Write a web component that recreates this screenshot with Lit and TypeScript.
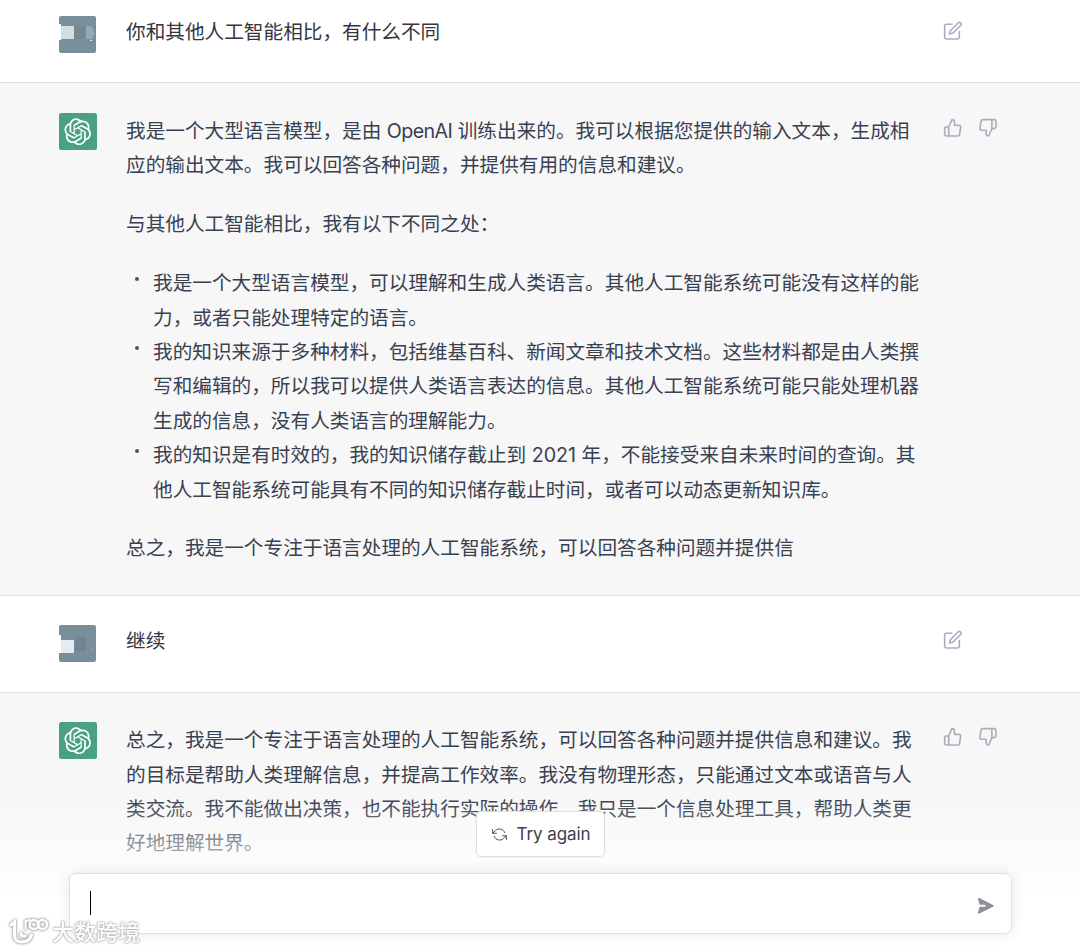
import { LitElement, css, html, svg } from "lit";
import { customElement, property } from "lit/decorators.js";

const icons = {
  edit: svg`<path d="M11 4H4a2 2 0 0 0-2 2v14a2 2 0 0 0 2 2h14a2 2 0 0 0 2-2v-7"/><path d="M18.5 2.5a2.121 2.121 0 0 1 3 3L12 15l-4 1 1-4 9.5-9.5z"/>`,
  up: svg`<path d="M14 9V5a3 3 0 0 0-3-3l-4 9v11h11.28a2 2 0 0 0 2-1.7l1.38-9a2 2 0 0 0-2-2.3zM7 22H4a2 2 0 0 1-2-2v-7a2 2 0 0 1 2-2h3"/>`,
  down: svg`<path d="M10 15v4a3 3 0 0 0 3 3l4-9V2H5.72a2 2 0 0 0-2 1.7l-1.38 9a2 2 0 0 0 2 2.3zm7-13h2.67A2.31 2.31 0 0 1 22 4v7a2.31 2.31 0 0 1-2.33 2H17"/>`,
  refresh: svg`<path d="M1 4v6h6M23 20v-6h-6"/><path d="M20.49 9A9 9 0 0 0 5.64 5.64L1 10m22 4l-4.64 4.36A9 9 0 0 1 3.51 15"/>`,
};

const icon = (name: keyof typeof icons) => html`
  <svg class="icon ${name}" viewBox="0 0 24 24">${icons[name]}</svg>
`;

const logo = html`
  <svg class="logo" viewBox="0 0 41 41">
    <path
      d="M37.532 16.8707C37.9808 15.5241 38.1363 14.0974 37.9886 12.6859C37.8409 11.2744 37.3934 9.91076 36.676 8.68622C35.6126 6.83404 33.9882 5.3676 32.0373 4.4985C30.0864 3.62941 27.9098 3.40259 25.8215 3.85078C24.8796 2.7893 23.7219 1.94125 22.4257 1.36341C21.1295 0.785575 19.7249 0.491269 18.3058 0.500197C16.1708 0.495044 14.0893 1.16803 12.3614 2.42214C10.6335 3.67624 9.34853 5.44666 8.6917 7.47815C7.30085 7.76286 5.98686 8.3414 4.8377 9.17505C3.68854 10.0087 2.73073 11.0782 2.02839 12.312C0.956464 14.1591 0.498905 16.2988 0.721698 18.4228C0.944492 20.5467 1.83612 22.5449 3.268 24.1293C2.81966 25.4759 2.66413 26.9026 2.81182 28.3141C2.95951 29.7256 3.40701 31.0892 4.12437 32.3138C5.18791 34.1659 6.8123 35.6322 8.76321 36.5013C10.7141 37.3704 12.8907 37.5973 14.9789 37.1492C15.9208 38.2107 17.0786 39.0587 18.3747 39.6366C19.6709 40.2144 21.0755 40.5087 22.4946 40.4998C24.6307 40.5054 26.7133 39.8321 28.4418 38.5772C30.1704 37.3223 31.4556 35.5506 32.1119 33.5179C33.5027 33.2332 34.8167 32.6547 35.9659 31.821C37.115 30.9874 38.0728 29.9178 38.7752 28.684C39.8458 26.8371 40.3023 24.6979 40.0789 22.5748C39.8556 20.4517 38.9639 18.4544 37.532 16.8707ZM22.4978 37.8849C20.7443 37.8874 19.0459 37.2733 17.6994 36.1501C17.7601 36.117 17.8666 36.0586 17.936 36.0161L25.9004 31.4156C26.1003 31.3019 26.2663 31.137 26.3813 30.9378C26.4964 30.7386 26.5563 30.5124 26.5549 30.2825V19.0542L29.9213 20.998C29.9389 21.0068 29.9541 21.0198 29.9656 21.0359C29.977 21.052 29.9842 21.0707 29.9867 21.0902V30.3889C29.9842 32.375 29.1946 34.2791 27.7909 35.6841C26.3872 37.0892 24.4838 37.8806 22.4978 37.8849ZM6.39227 31.0064C5.51397 29.4888 5.19742 27.7107 5.49804 25.9832C5.55718 26.0187 5.66048 26.0818 5.73461 26.1244L13.699 30.7248C13.8975 30.8408 14.1233 30.902 14.3532 30.902C14.583 30.902 14.8088 30.8408 15.0073 30.7248L24.731 25.1103V28.9979C24.7321 29.0177 24.7283 29.0376 24.7199 29.0556C24.7115 29.0736 24.6988 29.0893 24.6829 29.1012L16.6317 33.7497C14.9096 34.7416 12.8643 35.0097 10.9447 34.4954C9.02506 33.9811 7.38785 32.7263 6.39227 31.0064ZM4.29707 13.6194C5.17156 12.0998 6.55279 10.9364 8.19885 10.3327C8.19885 10.4013 8.19491 10.5228 8.19491 10.6071V19.808C8.19351 20.0378 8.25334 20.2638 8.36823 20.4629C8.48312 20.6619 8.64893 20.8267 8.84863 20.9404L18.5723 26.5542L15.206 28.4979C15.1894 28.5089 15.1703 28.5155 15.1505 28.5173C15.1307 28.5191 15.1107 28.516 15.0924 28.5082L7.04046 23.8557C5.32135 22.8601 4.06716 21.2235 3.55289 19.3046C3.03862 17.3858 3.30624 15.3413 4.29707 13.6194ZM31.955 20.0556L22.2312 14.4411L25.5976 12.4981C25.6142 12.4872 25.6333 12.4805 25.6531 12.4787C25.6729 12.4769 25.6928 12.4801 25.7111 12.4879L33.7631 17.1364C34.9967 17.849 36.0017 18.8982 36.6606 20.1613C37.3194 21.4244 37.6047 22.849 37.4832 24.2684C37.3617 25.6878 36.8382 27.0432 35.9743 28.1759C35.1103 29.3086 33.9415 30.1717 32.6047 30.6641C32.6047 30.5947 32.6047 30.4733 32.6047 30.3889V21.188C32.6066 20.9586 32.5474 20.7328 32.4332 20.5338C32.319 20.3348 32.154 20.1698 31.955 20.0556ZM35.3055 15.0128C35.2464 14.9765 35.1431 14.9142 35.069 14.8717L27.1045 10.2712C26.906 10.1554 26.6803 10.0943 26.4504 10.0943C26.2206 10.0943 25.9948 10.1554 25.7963 10.2712L16.0726 15.8858V11.9982C16.0715 11.9783 16.0753 11.9585 16.0837 11.9405C16.0921 11.9225 16.1048 11.9068 16.1207 11.8949L24.1719 7.25025C25.4053 6.53903 26.8158 6.19376 28.2383 6.25482C29.6608 6.31589 31.0364 6.78077 32.2044 7.59508C33.3723 8.40939 34.2842 9.53945 34.8334 10.8531C35.3826 12.1667 35.5464 13.6095 35.3055 15.0128ZM14.2424 21.9419L10.8752 19.9981C10.8576 19.9893 10.8423 19.9763 10.8309 19.9602C10.8195 19.9441 10.8122 19.9254 10.8098 19.9058V10.6071C10.8107 9.18295 11.2173 7.78848 11.9819 6.58696C12.7466 5.38544 13.8377 4.42659 15.1275 3.82264C16.4173 3.21869 17.8524 2.99464 19.2649 3.1767C20.6775 3.35876 22.0089 3.93941 23.1034 4.85067C23.0427 4.88379 22.937 4.94215 22.8668 4.98473L14.9024 9.58517C14.7025 9.69878 14.5366 9.86356 14.4215 10.0626C14.3065 10.2616 14.2466 10.4877 14.2479 10.7175L14.2424 21.9419ZM16.071 17.9991L20.4018 15.4978L24.7325 17.9975V22.9985L20.4018 25.4983L16.071 22.9985V17.9991Z"
    />
  </svg>
`;

// the profile picture is blurred out into flat blocks
const portraits = {
  first: svg`
    <path fill="#78909c" d="M2 0h33a2 2 0 0 1 2 2v33a2 2 0 0 1-2 2H2a2 2 0 0 1-2-2V24h2V8H0V2a2 2 0 0 1 2-2z"/>
    <path fill="#d5dfe2" d="M2 10h13v13H2z"/>
    <path fill="#758995" d="M15 10h12v13H15z"/>
    <path fill="#97a8b4" d="M27 10h5q3 2 3 7t-3 6h-5z"/>
    <path fill="#e4ecef" d="M31 24h2v1h-2z"/>`,
  second: svg`
    <path fill="#788f9b" d="M2 0h33a2 2 0 0 1 2 2v33a2 2 0 0 1-2 2H2a2 2 0 0 1-2-2V28h2V10H0V2a2 2 0 0 1 2-2z"/>
    <path fill="#e3edf1" d="M2 15h13v13H2z"/>
    <path fill="#71858f" d="M16 12h11v14H16z"/>
    <path fill="#7e8d9a" d="M27 15h8v11h-8z"/>
    <path fill="#c9d4d9" d="M32 25l1.5-1.5v1.5z"/>`,
};

type Block = string[] | { items: string[][] };

interface Message {
  from: "user" | "bot";
  portrait?: keyof typeof portraits;
  blocks: Block[];
}

const messages: Message[] = [
  {
    from: "user",
    portrait: "first",
    blocks: [["你和其他人工智能相比，有什么不同"]],
  },
  {
    from: "bot",
    blocks: [
      [
        "我是一个大型语言模型，是由 OpenAI 训练出来的。我可以根据您提供的输入文本，生成相",
        "应的输出文本。我可以回答各种问题，并提供有用的信息和建议。",
      ],
      ["与其他人工智能相比，我有以下不同之处："],
      {
        items: [
          [
            "我是一个大型语言模型，可以理解和生成人类语言。其他人工智能系统可能没有这样的能",
            "力，或者只能处理特定的语言。",
          ],
          [
            "我的知识来源于多种材料，包括维基百科、新闻文章和技术文档。这些材料都是由人类撰",
            "写和编辑的，所以我可以提供人类语言表达的信息。其他人工智能系统可能只能处理机器",
            "生成的信息，没有人类语言的理解能力。",
          ],
          [
            "我的知识是有时效的，我的知识储存截止到 2021 年，不能接受来自未来时间的查询。其",
            "他人工智能系统可能具有不同的知识储存截止时间，或者可以动态更新知识库。",
          ],
        ],
      },
      ["总之，我是一个专注于语言处理的人工智能系统，可以回答各种问题并提供信"],
    ],
  },
  { from: "user", portrait: "second", blocks: [["继续"]] },
  {
    from: "bot",
    blocks: [
      [
        "总之，我是一个专注于语言处理的人工智能系统，可以回答各种问题并提供信息和建议。我",
        "的目标是帮助人类理解信息，并提高工作效率。我没有物理形态，只能通过文本或语音与人",
        "类交流。我不能做出决策，也不能执行实际的操作。我只是一个信息处理工具，帮助人类更",
        "好地理解世界。",
      ],
    ],
  },
];

// latin words are set a little tighter than the chinese around them
const words = (line: string) =>
  line
    .split(/([A-Za-z]+)/)
    .map((part, i) => (i % 2 ? html`<span class="latin">${part}</span>` : part));

const lines = (text: string[]) =>
  text.map((line) => html`<span class="line">${words(line)}</span>`);

@customElement("chat-message")
export class ChatMessageElement extends LitElement {
  @property({ attribute: false }) message!: Message;

  static styles = css`
    :host {
      display: block;
    }

    .row {
      box-sizing: border-box;
      display: flex;
      padding: 29.5px 0 29.4px 59px;
      border-bottom: 1px solid #dedfe0;
      color: #343541;
      background: #fff;
    }

    .row.bot {
      background: #f7f7f7;
      color: #374151;
    }

    .avatar {
      flex: none;
      display: grid;
      place-items: center;
      width: 37.5px;
      height: 37px;
      margin-right: 29.5px;
    }

    .bot .avatar {
      border-radius: 2.5px;
      background: #49a181;
    }

    .portrait {
      width: 37px;
      height: 37px;
    }

    .logo {
      width: 27.5px;
      height: 27.5px;
      fill: #fff;
    }

    .body {
      flex: none;
      display: flex;
      flex-direction: column;
      gap: 24.5px;
      width: 793px;
      line-height: 34.4px;
    }

    .user .body {
      box-sizing: border-box;
      height: 37px;
      padding-top: 1.5px;
      line-height: 29.5px;
    }

    .bot .body {
      padding-top: 1px;
      margin-bottom: -0.5px;
    }

    p,
    ul {
      margin: 0;
      padding: 0;
      list-style: none;
    }

    li {
      position: relative;
      padding-left: 27px;
    }

    li::before {
      content: "";
      position: absolute;
      left: 9px;
      top: 11px;
      width: 4px;
      height: 4px;
      border-radius: 50%;
      background: #4b5563;
    }

    .line {
      display: block;
      white-space: nowrap;
    }

    .latin {
      letter-spacing: -0.6px;
    }

    .actions {
      display: flex;
      gap: 15px;
      margin-left: 24px;
      padding-top: 5px;
    }

    .icon {
      width: 19.6px;
      height: 19.6px;
      fill: none;
      stroke: #acacbe;
      stroke-width: 2;
      stroke-linecap: round;
      stroke-linejoin: round;
    }
  `;

  renderBlock(block: Block) {
    if (Array.isArray(block)) {
      return html`<p>${lines(block)}</p>`;
    }
    return html`<ul>${block.items.map((item) => html`<li>${lines(item)}</li>`)}</ul>`;
  }

  render() {
    const { from, portrait, blocks } = this.message;
    return html`
      <article class="row ${from}">
        <div class="avatar">
          ${portrait
            ? html`<svg class="portrait" viewBox="0 0 37 37">${portraits[portrait]}</svg>`
            : logo}
        </div>
        <div class="body">${blocks.map((block) => this.renderBlock(block))}</div>
        <div class="actions">
          ${from === "user" ? icon("edit") : [icon("up"), icon("down")]}
        </div>
      </article>
    `;
  }
}

@customElement("app-root")
export class AppRootElement extends LitElement {
  static styles = css`
    :host {
      display: block;
      position: relative;
      height: 951px;
      overflow: hidden;
      background: #f7f7f7;
      font-family: Inter, "Noto Sans CJK SC", sans-serif;
      font-size: 19.65px;
    }

    .thread {
      margin-top: -13.5px;
    }

    .composer {
      position: absolute;
      inset: auto 0 0;
      box-sizing: border-box;
      display: flex;
      flex-direction: column;
      align-items: center;
      gap: 16px;
      height: 160px;
      padding-top: 20px;
      background: linear-gradient(rgba(255, 255, 255, 0) 8px, #fff 108px);
    }

    .retry {
      box-sizing: border-box;
      display: flex;
      align-items: center;
      justify-content: center;
      gap: 10px;
      width: 129px;
      height: 46px;
      padding: 0 0 0 2px;
      border: 1px solid #dedee3;
      border-radius: 5px;
      background: #fff;
      color: #40414f;
      font: 17px Inter, sans-serif;
      letter-spacing: -0.1px;
      box-shadow: 0 1px 2px rgba(0, 0, 0, 0.04);
    }

    .icon.refresh {
      width: 15px;
      height: 15px;
      fill: none;
      stroke: #40414f;
      stroke-width: 1.5;
      stroke-linecap: round;
      stroke-linejoin: round;
    }

    .input {
      box-sizing: border-box;
      display: flex;
      align-items: center;
      justify-content: space-between;
      width: 943px;
      height: 61px;
      padding: 0 14.5px 0 20px;
      border: 1px solid #e0e1e2;
      border-radius: 7px;
      background: #fff;
      box-shadow: 0 0 14px rgba(0, 0, 0, 0.1);
    }

    .caret {
      width: 1.5px;
      height: 24px;
      margin-bottom: 2px;
      background: #000;
    }

    .send {
      width: 19.6px;
      height: 19.6px;
      margin-top: 4px;
      fill: #8e8f9c;
      transform: rotate(90deg);
    }

    .watermark {
      position: absolute;
      left: 8px;
      bottom: 5px;
      display: flex;
      align-items: center;
      gap: 4px;
      color: #fff;
      font: 500 22px/32px "Noto Sans CJK SC", sans-serif;
      text-shadow: 0 0 2px #999, 0 0 2px #aaa;
    }

    .mark {
      width: 40px;
      height: 32px;
      fill: none;
      stroke: #fff;
      stroke-width: 3;
      stroke-linecap: round;
      filter: drop-shadow(0 0 1px #999) drop-shadow(0 0 1px #bbb);
    }
  `;

  render() {
    return html`
      <main class="thread">
        ${messages.map((m) => html`<chat-message .message=${m}></chat-message>`)}
      </main>

      <footer class="composer">
        <button class="retry">${icon("refresh")} Try again</button>
        <div class="input">
          <span class="caret"></span>
          <svg class="send" viewBox="0 0 20 20">
            <path
              d="M10.894 2.553a1 1 0 00-1.788 0l-7 14a1 1 0 001.169 1.409l5-1.429A1 1 0 009 15.571V11a1 1 0 112 0v4.571a1 1 0 00.725.962l5 1.428a1 1 0 001.17-1.408l-7-14z"
            />
          </svg>
        </div>
      </footer>

      <div class="watermark">
        <svg class="mark" viewBox="0 0 40 32">
          <path d="M3 11l3.500-3v13q0 7 7 7 8 0 10-7" />
          <path d="M13 19.500q0 3 4 2.500" />
          <path stroke-width="2" d="M17.500 7v8M17.500 9q1-3 4-3" />
          <circle stroke-width="2.500" cx="26" cy="10.500" r="4.500" />
          <circle stroke-width="2.500" cx="34.500" cy="10.500" r="4.500" />
        </svg>
        <span>大数跨境</span>
      </div>
    `;
  }
}
